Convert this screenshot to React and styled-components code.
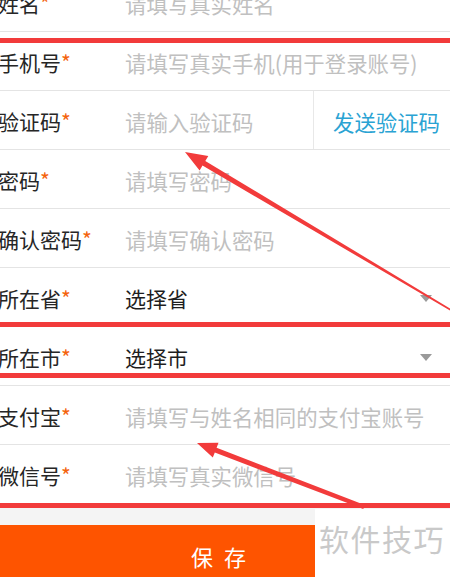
import React from 'react'
import styled, { createGlobalStyle } from 'styled-components'

const fields = [
  { label: '姓名', placeholder: '请填写真实姓名' },
  { label: '手机号', placeholder: '请填写真实手机(用于登录账号)' },
  { label: '验证码', placeholder: '请输入验证码', sendCode: true },
  { label: '密码', placeholder: '请填写密码' },
  { label: '确认密码', placeholder: '请填写确认密码' },
  { label: '所在省', select: '选择省' },
  { label: '所在市', select: '选择市' },
  { label: '支付宝', placeholder: '请填写与姓名相同的支付宝账号' },
  { label: '微信号', placeholder: '请填写真实微信号' },
]

// red marks drawn over the screenshot
const marks = [38, 322, 373, 503]

function arrow(tip, tail, head, half, w0, w1) {
  const dx = tail[0] - tip[0]
  const dy = tail[1] - tip[1]
  const len = Math.hypot(dx, dy)
  const ux = dx / len, uy = dy / len
  const px = -uy, py = ux
  const bx = tip[0] + ux * head, by = tip[1] + uy * head
  const pts = [
    tip,
    [bx + px * half, by + py * half],
    [bx + px * w0 / 2, by + py * w0 / 2],
    [tail[0] + px * w1 / 2, tail[1] + py * w1 / 2],
    [tail[0] - px * w1 / 2, tail[1] - py * w1 / 2],
    [bx - px * w0 / 2, by - py * w0 / 2],
    [bx - px * half, by - py * half],
  ]
  return pts.map(p => p[0].toFixed(1) + ',' + p[1].toFixed(1)).join(' ')
}

export default function App() {
  return (
    <Page>
      <GlobalStyle />
      <Form>
        {fields.map(f => (
          <Row key={f.label}>
            <Label>
              {f.label}
              <Star>*</Star>
            </Label>
            {f.select ? (
              <Picker>
                <PickerText>{f.select}</PickerText>
                <Caret />
              </Picker>
            ) : (
              <Input placeholder={f.placeholder} />
            )}
            {f.sendCode && <SendCode>发送验证码</SendCode>}
          </Row>
        ))}
      </Form>
      <Gap />
      <SaveButton>保 存</SaveButton>

      <Watermark>软件技巧</Watermark>

      <Marks width="450" height="577" viewBox="0 0 450 577">
        {marks.map(y => (
          <rect key={y} x="0" y={y} width="450" height="5" fill="#f23b3b" />
        ))}
        <polygon points={arrow([185, 152], [456, 313], 22, 8.5, 5.5, 1.6)} fill="#f23b3b" />
        <polygon points={arrow([197, 443], [364, 507], 20, 8, 5, 4)} fill="#f23b3b" />
      </Marks>
    </Page>
  )
}

const GlobalStyle = createGlobalStyle`
  body {
    margin: 0;
    background: #fff;
    font-family: "Noto Sans CJK SC", "Noto Sans", sans-serif;
    overflow: hidden;
  }
`

const Page = styled.div`
  position: relative;
  width: 450px;
  height: 577px;
  overflow: hidden;
  background: #f4f4f4;
`

const Form = styled.div`
  margin-top: -27px;
  background: #fff;
`

const Row = styled.div`
  display: flex;
  align-items: center;
  height: 58px;
  border-bottom: 1px solid #e4e4e4;
`

const Label = styled.div`
  width: 127px;
  margin-left: -2px;
  padding-top: 2px;
  font-size: 21px;
  color: #262626;
  flex-shrink: 0;
`

const Star = styled.span`
  color: #f4630c;
`

const Input = styled.input`
  flex: 1;
  min-width: 0;
  border: none;
  outline: none;
  padding: 2px 0 0;
  background: transparent;
  font-family: inherit;
  font-size: 21.4px;
  color: #222;

  &::placeholder {
    color: #c0c0c0;
  }
`

const SendCode = styled.div`
  align-self: stretch;
  display: flex;
  align-items: center;
  width: 117px;
  padding: 2px 0 0 19px;
  border-left: 1px solid #e8e8e8;
  font-size: 21.4px;
  color: #2aa3d3;
  flex-shrink: 0;
`

const Picker = styled.div`
  flex: 1;
  display: flex;
  align-items: center;
  padding-right: 18px;
`

const PickerText = styled.span`
  flex: 1;
  padding-top: 2px;
  font-size: 21px;
  color: #1e1e1e;
`

const Caret = styled.span`
  width: 0;
  height: 0;
  margin-top: 2px;
  border-left: 6px solid transparent;
  border-right: 6px solid transparent;
  border-top: 7px solid #9a9a9a;
`

const Gap = styled.div`
  height: 21px;
`

const SaveButton = styled.div`
  display: flex;
  align-items: center;
  justify-content: center;
  height: 62px;
  padding-right: 10px;
  background: #fe5400;
  color: #fff;
  font-size: 22px;
  letter-spacing: 3px;
`

const Watermark = styled.div`
  position: absolute;
  right: 0;
  bottom: 0;
  width: 135px;
  height: 68px;
  padding-left: 4px;
  box-sizing: border-box;
  background: #fff;
  color: #c9c9c9;
  font-size: 30px;
  line-height: 1;
  padding-top: 14px;
  letter-spacing: 1.5px;
`

const Marks = styled.svg`
  position: absolute;
  left: 0;
  top: 0;
  pointer-events: none;
`
